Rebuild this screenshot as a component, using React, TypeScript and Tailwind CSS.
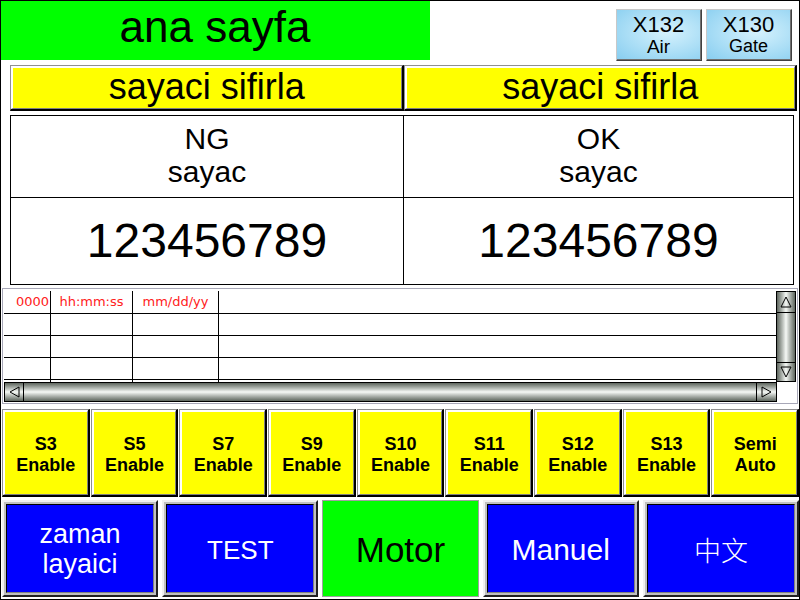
import type { ReactNode } from 'react'

const enables = [
  ['S3', 'Enable'],
  ['S5', 'Enable'],
  ['S7', 'Enable'],
  ['S9', 'Enable'],
  ['S10', 'Enable'],
  ['S11', 'Enable'],
  ['S12', 'Enable'],
  ['S13', 'Enable'],
  ['Semi', 'Auto'],
]

const logRows = [23, 22, 22, 22, 2]

function Raised({ className, children }: { className: string; children: ReactNode }) {
  return (
    <div className="border-t border-l border-[#909090] border-r-2 border-b-2 border-r-black border-b-black flex">
      <div
        className={`flex-1 border-t-2 border-l-2 border-white border-r border-b border-r-[#808080] border-b-[#808080] flex flex-col items-center justify-center ${className}`}
      >
        {children}
      </div>
    </div>
  )
}

function NavButton({ children, className }: { children: ReactNode; className?: string }) {
  return (
    <div className="border-2 border-t-[#f0f0f0] border-l-[#f0f0f0] border-r-[#202020] border-b-[#202020] bg-[#c0c0c0] p-[2px] flex">
      <div
        className={`flex-1 border border-t-black border-l-black border-r-[#808080] border-b-[#808080] bg-[#0000ff] text-white flex flex-col items-center justify-center leading-[30px] ${className ?? ''}`}
      >
        {children}
      </div>
    </div>
  )
}

function Arrow({ dir }: { dir: 'left' | 'right' | 'up' | 'down' }) {
  const pts = {
    left: '2,6 11,1 11,11',
    right: '11,6 2,1 2,11',
    up: '6,1 1,11 11,11',
    down: '6,11 1,1 11,1',
  }[dir]
  return (
    <svg width="13" height="13" viewBox="0 0 13 13">
      <polygon points={pts} fill="none" stroke="#000" strokeWidth="1" />
    </svg>
  )
}

export default function App() {
  return (
    <div className="w-[800px] h-[600px] bg-white border border-black flex flex-col font-['Liberation_Sans',Arial,sans-serif] text-black overflow-hidden">
      {/* title + air / gate */}
      <div className="h-[64px] flex">
        <div className="-mt-px -ml-px w-[430px] h-[60px] bg-[#00ff00] flex items-center justify-center pb-[6px]">
          <span className="text-[44px] leading-none">ana sayfa</span>
        </div>
        <div className="flex-1 flex justify-end gap-[4px] pt-[8px] pr-[7px]">
          {[
            ['X132', 'Air', 'text-[19px]'],
            ['X130', 'Gate', 'text-[18px]'],
          ].map(([a, b, s]) => (
            <div
              key={a}
              className="w-[86px] h-[52px] border border-t-[#c8c8c8] border-l-[#c8c8c8] border-r-[#404040] border-b-[#404040] flex"
            >
              <div className="flex-1 border-b border-r border-[#707070] bg-[radial-gradient(ellipse_at_60%_45%,#d6f2fd,#88cef0)] flex flex-col items-center justify-center">
                <span className="text-[22px] leading-[23px]">{a}</span>
                <span className={`${s} leading-[21px]`}>{b}</span>
              </div>
            </div>
          ))}
        </div>
      </div>

      {/* reset buttons */}
      <div className="ml-[9px] w-[787px] h-[46px] grid grid-cols-2">
        <Raised className="bg-[#ffff00]">
          <span className="text-[36px] leading-none pb-[3px]">sayaci sifirla</span>
        </Raised>
        <Raised className="bg-[#ffff00]">
          <span className="text-[36px] leading-none pb-[3px]">sayaci sifirla</span>
        </Raised>
      </div>

      {/* counters */}
      <div className="mt-[4px] ml-[9px] w-[784px] h-[170px] border border-black grid grid-cols-[393px_1fr] grid-rows-[82px_1fr]">
        <div className="border-r border-b border-black flex flex-col items-center justify-center text-[30px] leading-[33px] pb-[3px]">
          <span>NG</span>
          <span>sayac</span>
        </div>
        <div className="border-b border-black flex flex-col items-center justify-center text-[30px] leading-[33px] pb-[3px]">
          <span>OK</span>
          <span>sayac</span>
        </div>
        <div className="border-r border-black flex items-center justify-center text-[48px] leading-none">
          123456789
        </div>
        <div className="flex items-center justify-center text-[48px] leading-none">123456789</div>
      </div>

      {/* log table */}
      <div className="mt-[3px] ml-px w-[796px] h-[116px] border border-[#a8a8b8] p-px flex flex-col">
        <div className="h-[92px] flex pt-px">
          <div className="w-[772px] flex flex-col">
            {logRows.map((h, i) => (
              <div
                key={i}
                style={{ height: h }}
                className={`flex ${i < 4 ? 'border-b border-black' : ''} font-['DejaVu_Sans',sans-serif] text-[13px] text-[#ff2020]`}
              >
                <div className="w-[47px] border-r border-black flex items-center justify-end pr-[1px]">
                  {i === 0 ? '0000' : ''}
                </div>
                <div className="w-[82px] border-r border-black flex items-center justify-center">
                  {i === 0 ? 'hh:mm:ss' : ''}
                </div>
                <div className="w-[86px] border-r border-black flex items-center justify-center">
                  {i === 0 ? 'mm/dd/yy' : ''}
                </div>
                <div className="flex-1" />
              </div>
            ))}
          </div>
          <div className="w-[20px] border border-black flex flex-col bg-gradient-to-r from-[#5e665e] via-[#f6f9f6] to-[#5e665e]">
            <div className="h-[21px] border-b border-black flex items-center justify-center">
              <Arrow dir="up" />
            </div>
            <div className="flex-1" />
            <div className="h-[19px] border-t border-black flex items-center justify-center">
              <Arrow dir="down" />
            </div>
          </div>
        </div>
        <div className="h-[20px] flex">
          <div className="w-[773px] border border-black flex bg-gradient-to-b from-[#5e665e] via-[#f6f9f6] to-[#5e665e]">
            <div className="w-[19px] border-r border-black flex items-center justify-center">
              <Arrow dir="left" />
            </div>
            <div className="flex-1" />
            <div className="w-[20px] border-l border-black flex items-center justify-center">
              <Arrow dir="right" />
            </div>
          </div>
        </div>
      </div>

      {/* enable buttons */}
      <div className="mt-[5px] ml-px w-[797px] h-[88px] grid grid-cols-9 gap-px">
        {enables.map(([a, b]) => (
          <Raised key={a} className="bg-[#ffff00] font-bold text-[18px] leading-[21px] pt-[3px]">
            <span>{a}</span>
            <span>{b}</span>
          </Raised>
        ))}
      </div>

      {/* navigation */}
      <div className="mt-[3px] ml-px w-[797px] h-[97px] grid grid-cols-5 gap-[4px]">
        <NavButton className="text-[27px] leading-[28px]">
          <span>zaman</span>
          <span>layaici</span>
        </NavButton>
        <NavButton className="text-[26px] pt-[2px]">TEST</NavButton>
        <div className="border border-[#a0a0a0] bg-[#00ff00] flex items-center justify-center pt-[2px]">
          <span className="text-[35px] leading-none">Motor</span>
        </div>
        <NavButton className="text-[30px] pt-[2px]">Manuel</NavButton>
        <NavButton className="text-[27px] pt-[2px] font-['Noto_Sans_CJK_SC',sans-serif] font-light">中文</NavButton>
      </div>
    </div>
  )
}
